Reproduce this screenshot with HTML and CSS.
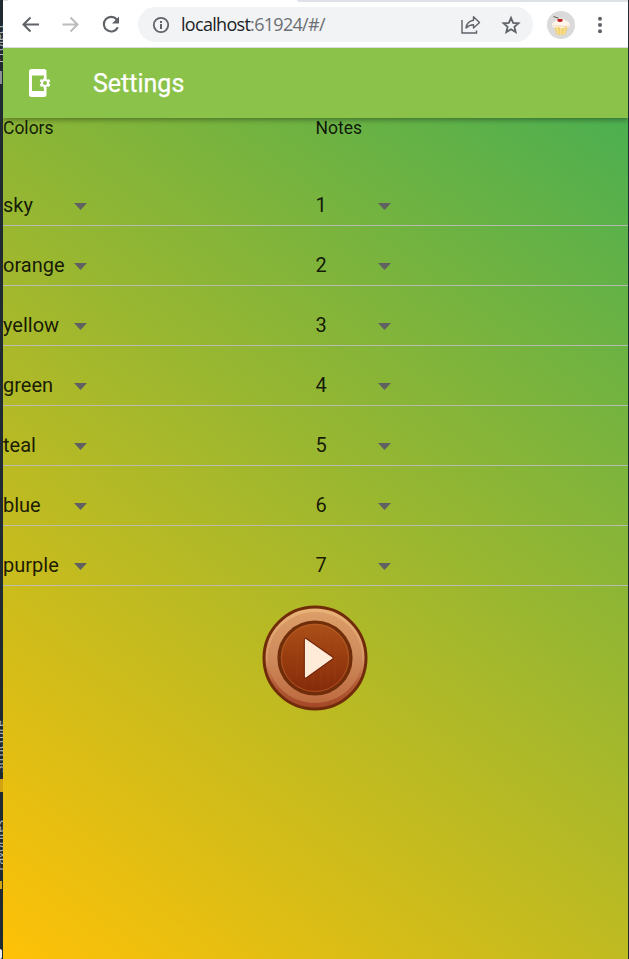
FILE: index.html
```html
<!DOCTYPE html>
<html lang="en">
<head>
<meta charset="utf-8">
<title>Settings</title>
<link rel="stylesheet" href="styles.css">
</head>
<body>
<div class="desktop">
  <aside class="rail">
    <span class="rail-text project">Project</span>
    <span class="rail-dot commit"></span>
    <span class="rail-text structure">Structure</span>
    <span class="rail-dot blocks"></span>
    <span class="rail-text favorites">Favorites</span>
    <span class="rail-dot fav"></span>
    <span class="rail-dot corner"></span>
  </aside>
  <div class="window">
    <div class="tabstrip"><span class="tab-left"></span><span class="tab-right"></span></div>
    <div class="toolbar">
      <svg class="nav" viewBox="0 0 24 24"><path d="M20 11.500H5M11.500 4.500 4.500 11.500l7 7" fill="none" stroke="#5f6368" stroke-width="2"/></svg>
      <svg class="nav" viewBox="0 0 24 24"><path d="M3.500 11.500H19M11.500 4.500l7 7-7 7" fill="none" stroke="#babcbe" stroke-width="2"/></svg>
      <svg class="nav" viewBox="0 0 24 24"><path d="M17.800 6.500A7.300 7.300 0 1 0 18.800 14.200" fill="none" stroke="#5f6368" stroke-width="2.100"/><path d="M20 3.500v7h-7z" fill="#5f6368"/></svg>
      <div class="address">
        <svg class="info" viewBox="0 0 18 18"><circle cx="9" cy="9" r="7.200" fill="none" stroke="#5f6368" stroke-width="1.800"/><path d="M8 8h2v5H8zM8 5h2v2H8z" fill="#5f6368"/></svg>
        <span class="url"><b>localhost</b>:61924/#/</span>
        <svg class="share" viewBox="0 0 22 20"><path d="M2 5v13h14.500v-2.500" fill="none" stroke="#5f6368" stroke-width="1.400"/><path d="M13.500 1.800 19.500 7.500l-6 5.500V9.700c-3.200 0-5.300 1-7.500 3.300.5-4 3-7 7.500-7.700z" fill="none" stroke="#5f6368" stroke-width="1.400" stroke-linejoin="round"/></svg>
        <svg class="star" viewBox="0 0 20 20"><path d="m10 2.800 2.100 5 5.400.45-4.100 3.550 1.250 5.300L10 14.250 5.350 17.100l1.250-5.300-4.100-3.550 5.400-.45z" fill="none" stroke="#5f6368" stroke-width="1.800"/></svg>
      </div>
      <svg class="avatar" viewBox="0 0 28 28"><circle cx="14" cy="14" r="14" fill="#dadada"/><path d="m7 15 2.500 8q4.500 2 9 0L21 15z" fill="#f3cf6c"/><path d="m10 17 1.500 6M14 17v7m4-7-1.500 6" stroke="#fbe39a" stroke-width="1.300"/><path d="M5 14c0-3 3-3 4-5 2-2 7-2 9 0 1 1 5 2 5 5 0 2-3 3-5 2-2 2-5 1-6 0-3 1-7 1-7-2z" fill="#fff5e9"/><path d="M6 14c3 2 5 0 8 1s5 1 8-1" fill="none" stroke="#e6cfb5" stroke-width=".8"/><path d="M10.500 8h5v2.200q-2.500 1.500-5 0z" fill="#bd1d20"/><path d="m6.500 5.500 5 1.700" stroke="#65594f"/></svg>
      <svg class="more" viewBox="0 0 6 18"><circle cx="3" cy="2.700" r="2"/><circle cx="3" cy="9" r="2"/><circle cx="3" cy="15.300" r="2"/></svg>
    </div>
    <header class="appbar">
      <svg class="phone" viewBox="0 0 25 28"><path d="M5.500 0h12.500Q20.500 0 20.500 2.500V9H18V6.500H6v15.500h12v-3h2.500v6.500q0 2.500-2.500 2.500h-12.500Q3 28 3 25.500v-23Q3 0 5.500 0z" fill="#fff"/><circle cx="19" cy="14" r="4.200" fill="#fff"/><path d="M19 8.600v10.800M14.300 11.300l9.400 5.400M23.700 11.300l-9.400 5.400" stroke="#fff" stroke-width="2.800"/><circle cx="19" cy="14" r="2" fill="#8bc34a"/></svg>
      <h1>Settings</h1>
    </header>
    <main class="content">
      <div class="heads"><span>Colors</span><span>Notes</span></div>
      <div class="row"><div class="select color">sky<i></i></div><div class="select note">1<i></i></div></div>
      <div class="row"><div class="select color">orange<i></i></div><div class="select note">2<i></i></div></div>
      <div class="row"><div class="select color">yellow<i></i></div><div class="select note">3<i></i></div></div>
      <div class="row"><div class="select color">green<i></i></div><div class="select note">4<i></i></div></div>
      <div class="row"><div class="select color">teal<i></i></div><div class="select note">5<i></i></div></div>
      <div class="row"><div class="select color">blue<i></i></div><div class="select note">6<i></i></div></div>
      <div class="row"><div class="select color">purple<i></i></div><div class="select note">7<i></i></div></div>
      <svg class="play" viewBox="0 0 106 106">
        <defs>
          <linearGradient id="rim" x2="0" y2="1"><stop offset="0" stop-color="#dc9e68"/><stop offset=".5" stop-color="#ce8a5c"/><stop offset="1" stop-color="#bd6b3f"/></linearGradient>
          <linearGradient id="edge" x2="0" y2="1"><stop offset="0" stop-color="#e8b478"/><stop offset=".5" stop-color="#d99767"/><stop offset=".75" stop-color="#b35c38"/><stop offset="1" stop-color="#a34726"/></linearGradient>
          <linearGradient id="wood" x2="0" y2="1"><stop offset="0" stop-color="#ac5119"/><stop offset=".5" stop-color="#983c10"/><stop offset="1" stop-color="#84290a"/></linearGradient>
        </defs>
        <circle cx="53" cy="53" r="51" fill="url(#edge)" stroke="#702b09" stroke-width="3"/>
        <ellipse cx="53" cy="52.500" rx="47" ry="45.500" fill="url(#rim)"/>
        <circle cx="53" cy="53" r="36" fill="url(#wood)" stroke="#702d09" stroke-width="3.200"/>
        <circle cx="53" cy="53" r="33.500" fill="none" stroke="#b9662b" stroke-width="1" opacity=".65"/>
        <path d="M35 35v36M43 25v56M51 22v62M59 22v62M66 25v55M73 32v42" stroke="#b85a22" stroke-width=".8" opacity=".2"/>
        <path d="M43.500 34.500v37.500l26.500-19z" fill="#ffebd8" stroke="#752507" stroke-width="3.500" stroke-linejoin="round"/>
        <path d="M43.500 34.500v37.500l26.500-19z" fill="#ffebd8" stroke="#ffebd8" stroke-width="1.200" stroke-linejoin="round"/>
      </svg>
    </main>
  </div>
</div>
</body>
</html>
```

FILE: styles.css
```css
* { box-sizing: border-box; }
body { margin: 0; font-family: Roboto, sans-serif; color: rgba(0, 0, 0, .87); }
svg { display: block; flex: none; }
.desktop { width: 629px; height: 959px; display: grid; grid-template-columns: 3px 625px 1px; background: #202b31; overflow: hidden; }
.rail { position: relative; overflow: hidden; }
.rail-text { position: absolute; left: -7px; writing-mode: vertical-rl; transform: rotate(180deg); font: 12px/14px "Open Sans", sans-serif; color: #b5babd; }
.project { top: 24px; }
.structure { top: 720px; }
.favorites { top: 820px; }
.rail-dot { position: absolute; left: 0; width: 2px; background: #d2a411; }
.commit { top: 71px; height: 13px; background: #8a9094; }
.blocks { top: 779px; height: 13px; width: 3px; }
.fav { top: 881px; height: 8px; }
.corner { top: 949px; height: 10px; background: #eee; border-radius: 0 2px 2px 0; }
.window { display: flex; flex-direction: column; height: 959px; }
.tabstrip { height: 2px; background: #fff; display: flex; justify-content: space-between; }
.tab-left { width: 5px; height: 1px; background: #dee1e6; }
.tab-right { width: 331px; background: #dee1e6; border-bottom-left-radius: 4px 2px; }
.toolbar { height: 46px; background: #fff; border-bottom: 1px solid #d9dce0; display: flex; align-items: center; padding: 0 0 0 16px; }
.nav { width: 24px; height: 24px; margin-right: 16px; }
.address { width: 395px; height: 35px; margin-left: -1px; border-radius: 18px; background: #f1f3f4; display: flex; align-items: center; padding: 0 12px 0 14px; }
.info { width: 18px; height: 18px; }
.url { flex: 1; margin-left: 11px; font: 18px/25px "Open Sans", sans-serif; letter-spacing: -.7px; color: #6b6f73; }
.url b { font-weight: 400; color: #202124; }
.share { width: 22px; height: 20px; margin-right: 19px; }
.star { width: 20px; height: 20px; }
.avatar { width: 28px; height: 28px; margin-left: 14px; }
.more { width: 6px; height: 18px; margin-left: 22px; fill: #5f6368; }
.appbar { position: relative; z-index: 1; height: 70px; display: flex; align-items: center; padding-left: 23px; background: #8bc34a; box-shadow: 0 2px 5px rgba(0, 0, 0, .35); clip-path: inset(0 0 -12px 0); }
.phone { width: 25px; height: 28px; }
h1 { margin: 2px 0 0 42px; font-size: 25px; font-weight: 400; line-height: 30px; color: #fff; -webkit-text-stroke: .25px #fff; }
.content { flex: 1; background: linear-gradient(216.6deg, #4caf50, #ffc107); }
.heads { display: grid; grid-template-columns: 1fr 1fr; height: 48px; font-size: 17.500px; line-height: 20px; }
.row { height: 60px; display: grid; grid-template-columns: 1fr 1fr; border-bottom: 1px solid rgba(189, 189, 189, .9); font-size: 20px; }
.select { display: flex; align-items: center; justify-content: space-between; height: 24px; margin-top: 27px; line-height: 24px; }
.color { width: 84px; }
.note { width: 75.500px; }
.select i { width: 13px; height: 7px; margin-top: 3px; background: #616161; clip-path: polygon(0 0, 100% 0, 50% 100%); }
.play { width: 106px; height: 106px; margin: 18.500px 0 0 259px; }
```
